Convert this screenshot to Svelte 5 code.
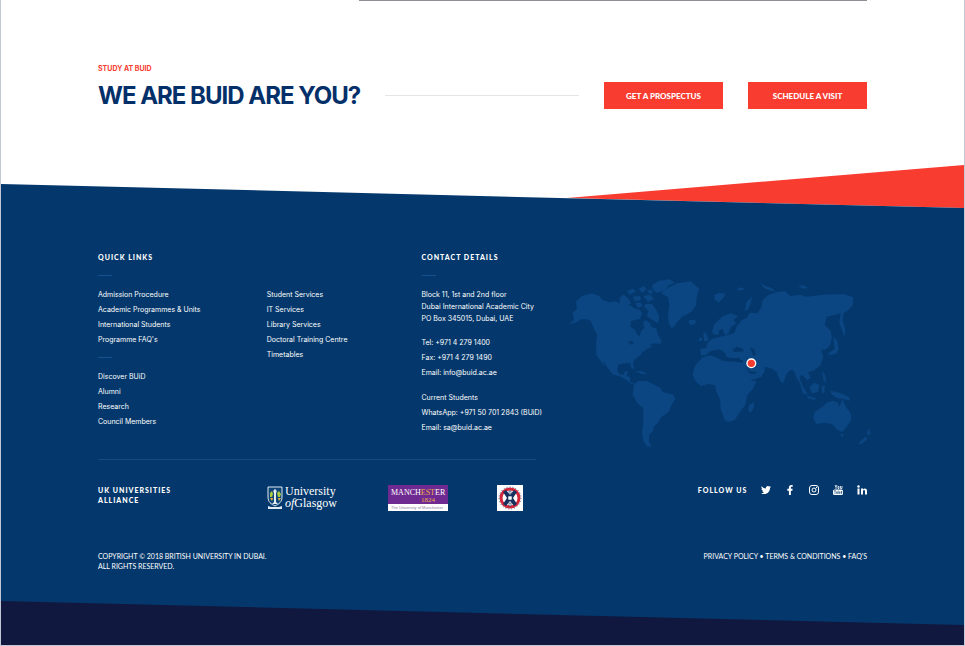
<script>
	const programmes = ['Admission Procedure', 'Academic Programmes & Units', 'International Students', "Programme FAQ's"];
	const about = ['Discover BUiD', 'Alumni', 'Research', 'Council Members'];
	const services = ['Student Services', 'IT Services', 'Library Services', 'Doctoral Training Centre', 'Timetables'];
</script>

<div class="page">
	<section class="study">
		<div class="strip"></div>
		<p class="eyebrow">STUDY AT BUID</p>
		<div class="cta">
			<h1>WE ARE BUID ARE YOU?</h1>
			<span class="rule"></span>
			<button>GET A PROSPECTUS</button>
			<button>SCHEDULE A VISIT</button>
		</div>
	</section>

	<svg class="slant top" viewBox="0 0 963 43" preserveAspectRatio="none" aria-hidden="true">
		<path fill="#f93c30" d="M566 33 963 0v43z" />
		<path fill="#04386c" d="M0 19 963 43H0z" />
	</svg>

	<footer>
		<div class="columns">
			<div class="info">
				<nav class="links" aria-label="Quick links">
					<h2>QUICK LINKS</h2>
					<span class="dash"></span>
					<div class="lists">
						<div>
							<ul>
								{#each programmes as item}
									<li><a href="#top">{item}</a></li>
								{/each}
							</ul>
							<span class="dash"></span>
							<ul>
								{#each about as item}
									<li><a href="#top">{item}</a></li>
								{/each}
							</ul>
						</div>
						<ul>
							{#each services as item}
								<li><a href="#top">{item}</a></li>
							{/each}
						</ul>
					</div>
				</nav>
				<div class="contact">
					<h2>CONTACT DETAILS</h2>
					<span class="dash"></span>
					<address>
						Block 11, 1st and 2nd floor<br />
						Dubai International Academic City<br />
						PO Box 345015, Dubai, UAE
					</address>
					<ul>
						<li>Tel: +971 4 279 1400</li>
						<li>Fax: +971 4 279 1490</li>
						<li>Email: <a href="mailto:info@buid.ac.ae">info@buid.ac.ae</a></li>
					</ul>
					<ul>
						<li>Current Students</li>
						<li>WhatsApp: +971 50 701 2843 (BUiD)</li>
						<li>Email: <a href="mailto:sa@buid.ac.ae">sa@buid.ac.ae</a></li>
					</ul>
				</div>
			</div>

			<svg class="map" viewBox="24 24 912 516" role="img" aria-label="World map, Dubai marked">
				<g fill="#0b4682">
					<!-- north and central america -->
					<path d="M38 128 51 116 48 94 66 78 96 70 118 79 128 90 150 97 168 94 184 104 210 106 226 116 240 119 246 130 240 146 226 150 213 153 211 170 226 180 232 196 240 197 243 182 253 174 249 158 256 150 269 158 274 170 289 176 294 194 304 212 302 222 282 220 266 226 280 228 262 236 249 246 238 258 226 267 219 276 221 298 214 294 210 280 190 280 175 284 172 302 180 314 192 313 195 303 204 304 200 318 210 322 210 336 224 341 214 342 200 331 182 320 158 313 148 300 134 280 128 272 134 290 122 272 109 255 108 220 112 195 102 176 92 152 76 147 64 148 46 158 25 161 42 150z" />
					<!-- arctic islands -->
					<path d="M178 84 190 74 204 84 214 100 196 110 180 104z M200 64l18-8 10 8-18 10z M218 80l22-2 4 12-20 4z M236 56l16-8 8 10-14 10z M250 78l20-4 12 14-18 8z M256 102l20 0 14 20 8 18-4 20-20-12-14-10 6-14-14-14z M226 100l14-4 8 12-14 6z M262 62l14-4 2 12-10 2z" />
					<path d="M276 46 298 32 330 28 344 38 324 48 314 62 290 68 280 60z" />
					<path d="M226 304 246 304 264 312 244 312z M212 226l10-2 6 8-10 2z" />
					<!-- greenland, iceland -->
					<path d="M304 70 322 54 352 40 392 34 418 56 410 80 408 106 394 126 366 140 350 158 336 176 326 160 324 134 328 106 324 82z M388 150 406 150 408 160 394 166 386 158z" />
					<!-- south america -->
					<path d="M222 342 236 332 262 334 286 346 302 354 308 366 340 374 346 386 334 406 326 426 304 440 296 456 282 470 278 484 268 494 266 514 276 530 260 528 250 512 246 488 250 458 250 414 232 400 218 374z" />
					<!-- africa -->
					<path d="M428 262 452 256 466 260 488 272 514 270 530 276 548 278 562 312 572 332 590 334 578 358 562 374 556 404 540 426 524 450 504 456 494 450 482 416 480 388 468 362 466 346 446 342 422 348 404 330 398 312 406 286z M568 404 582 396 582 412 572 428 564 420z" />
					<!-- british isles, scandinavia -->
					<path d="M430 186 440 192 446 212 432 214z M418 204l8-2 0 10-10 2z" />
					<path d="M456 186 462 164 486 140 512 130 534 138 520 150 530 160 512 172 506 190 494 196 488 178 478 180 476 194 462 194z" />
					<path d="M462 76l16-8 18 4-8 14-12 12-12-10z" />
					<!-- europe and asia -->
					<path d="M422 256 422 236 440 234 440 222 454 208 474 202 500 196 522 190 530 170 546 150 560 144 570 128 592 130 604 112 608 90 624 76 650 66 676 64 690 78 720 74 740 80 790 74 850 72 880 82 878 106 862 122 850 130 848 148 856 180 854 202 846 180 838 160 842 130 820 136 800 140 794 164 812 182 816 204 810 226 798 238 784 240 790 260 782 286 760 302 744 306 752 324 742 330 726 314 718 322 730 354 738 376 728 368 720 340 710 324 702 302 690 300 678 314 670 340 660 332 650 306 636 296 614 290 614 304 604 320 570 332 556 308 548 282 548 270 520 266 500 262 496 250 480 238 466 240 450 244 438 256z" />
					<path d="M554 124 560 96 576 80 572 100 566 116z M600 40 612 46 634 54 646 64 632 62 612 54z M714 48 730 46 744 54 728 56z M530 58 542 52 556 56 540 62z" />
					<!-- japan, philippines, indonesia -->
					<path d="M820 200 832 212 836 236 828 252 808 256 806 248 824 238z M786 302 796 316 798 340 790 330z" />
					<path d="M720 342 734 358 744 374 734 370z M748 352 762 338 778 344 774 366 756 370z M742 378 768 384 764 390 742 384z M784 350l10-4 0 20-8 6z M810 362 838 368 866 380 870 392 848 386 830 384 816 374z" />
					<!-- australia, new zealand -->
					<path d="M764 426 786 412 800 398 820 392 834 398 838 410 848 388 858 412 872 430 874 450 860 470 848 486 832 480 816 462 794 458 768 462 760 444z M840 492 852 492 846 502z M924 476 932 488 926 498 922 492z M916 500 922 508 904 522 894 522z" />
				</g>
				<!-- inland seas -->
				<g fill="#04386c">
					<path d="M518 240 530 230 548 236 552 244 522 246z M570 232 582 236 588 254 580 258z M484 260 512 264 540 264 540 272 510 276 486 270z M554 286 570 304 590 306 586 312 570 312z M204 216l12-4 6 8-10 4z" />
				</g>
				<circle cx="574" cy="280" r="15" fill="#fff" />
				<circle cx="574" cy="280" r="11" fill="#f93c30" />
			</svg>
		</div>

		<div class="partners">
			<h2>UK UNIVERSITIES<br />ALLIANCE</h2>
			<div class="logos">
				<svg width="72" height="26" viewBox="0 0 72 26" role="img" aria-label="University of Glasgow">
					<path d="M1 2h14v10c0 5-3 7-7 9-4-2-7-4-7-9z" fill="#0f4478" stroke="#dfe9f2" />
					<path d="M8 4c2 1 2 3 1 4v9l2 2H5l2-2V8C6 7 6 5 8 4z" fill="#e4edf0" />
					<path d="M3 8l2-2 1 3-1 3H3zM10 8l2-2 2 3-1 3h-2z" fill="#a9c93f" />
					<path d="M3 13h3l-1 3zM11 13h3l-2 3z" fill="#e7b43a" />
					<path d="M1 21l3 1h8l3-1v3H1z" fill="#dfe9f2" />
					<text class="serif" x="18" y="10" font-size="12" fill="#fff">University</text>
					<text class="serif" x="18" y="22" font-size="12" fill="#fff"><tspan font-style="italic">of</tspan>Glasgow</text>
				</svg>
				<svg width="60" height="26" viewBox="0 0 60 26" role="img" aria-label="The University of Manchester">
					<path fill="#6f2a91" d="M0 0h60v19H0z" />
					<path fill="#fff" d="M0 19h60v7H0z" />
					<text class="serif" x="3" y="10" font-size="8" fill="#fff">MANCH<tspan fill="#eeb14a">EST</tspan>ER</text>
					<text class="serif" x="33" y="17" font-size="7" fill="#eeb14a">1824</text>
					<text class="sans" x="3" y="24" font-size="4" fill="#8f7aa0">The University of Manchester</text>
				</svg>
				<svg width="26" height="26" viewBox="0 0 26 26" role="img" aria-label="The University of Edinburgh">
					<path fill="#fff" d="M0 0h26v26H0z" />
					<circle cx="13" cy="13" r="9" fill="#fff" stroke="#d3283c" stroke-width="3" />
					<path d="M6 7l3-2 4 5 4-5 3 2-4 6 4 6-3 2-4-5-4 5-3-2 4-6z" fill="#17315f" />
					<circle cx="13" cy="13" r="11" fill="none" stroke="#4a5c85" stroke-dasharray="1 2" />
					<path d="M11 11h4v4h-4zM12 6h2v3h-2zM12 18h2v3h-2z" fill="#fff" stroke="#17315f" stroke-width=".6" />
				</svg>
			</div>
			<div class="social">
				<h2>FOLLOW US</h2>
				<a href="#twitter" aria-label="Twitter">
					<svg viewBox="0 0 24 24"><path d="M23.953 4.57a10 10 0 01-2.825.775 4.958 4.958 0 002.163-2.723c-.951.555-2.005.959-3.127 1.184a4.92 4.92 0 00-8.384 4.482C7.69 8.095 4.067 6.13 1.64 3.162a4.822 4.822 0 00-.666 2.475c0 1.71.87 3.213 2.188 4.096a4.904 4.904 0 01-2.228-.616v.06a4.923 4.923 0 003.946 4.827 4.996 4.996 0 01-2.212.085 4.936 4.936 0 004.604 3.417 9.867 9.867 0 01-6.102 2.105c-.39 0-.779-.023-1.17-.067a13.995 13.995 0 007.557 2.209c9.053 0 13.998-7.496 13.998-13.985 0-.21 0-.42-.015-.63A9.935 9.935 0 0024 4.59z" /></svg>
				</a>
				<a href="#facebook" aria-label="Facebook">
					<svg viewBox="-96 0 512 512"><path d="M279.14 288l14.22-92.66h-88.91v-60.13c0-25.35 12.42-50.06 52.24-50.06h40.42V6.26S260.43 0 225.36 0c-73.22 0-121.08 44.38-121.08 124.72v70.62H22.89V288h81.39v224h100.17V288z" /></svg>
				</a>
				<a href="#instagram" aria-label="Instagram">
					<svg viewBox="0 0 20 20">
						<rect x="1" y="1" width="18" height="18" rx="5" fill="none" stroke="#fff" stroke-width="2" />
						<circle cx="10" cy="10" r="4" fill="none" stroke="#fff" stroke-width="2" />
						<circle cx="15" cy="5" r="1.3" />
					</svg>
				</a>
				<a href="#youtube" aria-label="YouTube">
					<svg viewBox="0 0 20 20">
						<path d="M3 9h14q3 0 3 3v5q0 3-3 3H3q-3 0-3-3v-5q0-3 3-3z" />
						<path d="M4 0l2 4 2-4M6 4v4M10 3h2v4h-2zM15 2v5h3V2" fill="none" stroke="#fff" stroke-width="1.6" />
						<path d="M2 11.500h4M4 11.500V18M7 13v4h2v-4M11.500 11v6h2v-3h-2M18 17h-2v-4h2v2h-2" fill="none" stroke="#04386c" stroke-width="1.1" />
					</svg>
				</a>
				<a href="#linkedin" aria-label="LinkedIn">
					<svg viewBox="0 0 20 20">
						<circle cx="3" cy="3" r="2.400" />
						<path d="M1 7h4v12H1zM8 7h4v2c2-3 8-3 8 3v7h-4v-6c0-4-4-4-4 0v6H8z" />
					</svg>
				</a>
			</div>
		</div>

		<div class="legal">
			<p>COPYRIGHT © 2018 BRITISH UNIVERSITY IN DUBAI.<br />ALL RIGHTS RESERVED.</p>
			<p><a href="#privacy">PRIVACY POLICY</a> • <a href="#terms">TERMS & CONDITIONS</a> • <a href="#faqs">FAQ'S</a></p>
		</div>
	</footer>

	<svg class="slant bottom" viewBox="0 0 963 44" preserveAspectRatio="none" aria-hidden="true">
		<path fill="#11183f" d="M0 0 963 24V44H0z" />
	</svg>
</div>

<style>
	:global(body) {
		margin: 0;
		background: #fff;
	}

	.page {
		border: 1px solid #c3c9d4;
		border-top: 0;
		font-family: Inter, sans-serif;
		font-size: 7px;
		color: #fff;
	}

	h1, h2, p, ul {
		margin: 0;
		padding: 0;
	}

	li { list-style: none }

	a {
		color: inherit;
		text-decoration: none;
	}

	svg { display: block }

	.study {
		padding: 0 97px 56px;
	}

	.strip {
		width: 66%;
		height: 1px;
		margin: 0 0 63px auto;
		background: #8f8e94;
	}

	.eyebrow {
		margin-bottom: 8px;
		font-size: 7px;
		line-height: 10px;
		font-weight: 700;
		color: #f93c30;
	}

	.cta {
		display: flex;
		align-items: center;
		gap: 25px;
	}

	h1 {
		font-size: 24px;
		line-height: 27px;
		font-weight: 700;
		letter-spacing: -1px;
		white-space: nowrap;
		color: #04306a;
	}

	.rule {
		flex: 1;
		height: 1px;
		background: #e4e5e8;
	}

	button {
		width: 119px;
		height: 27px;
		padding: 0;
		border: 0;
		background: #f93c30;
		font: 900 8px/10px Lato, sans-serif;
		color: #fff;
	}

	.slant { width: 100% }
	.slant.top { height: 43px }
	.slant.bottom { height: 44px; background: #04386c }

	footer {
		padding: 44px 97px 30px;
		background: #04386c;
	}

	.columns {
		display: flex;
		justify-content: space-between;
		align-items: flex-start;
	}

	.info {
		display: grid;
		grid-template-columns: minmax(0, 324fr) minmax(0, 115fr);
		width: 57%;
		padding-bottom: 24px;
		border-bottom: 1px solid #174a82;
	}

	h2 {
		font-family: Lato, sans-serif;
		font-size: 7px;
		line-height: 10px;
		font-weight: 900;
		letter-spacing: 1px;
	}

	.dash {
		display: block;
		width: 14px;
		height: 1px;
		margin: 10px 0 11px;
		background: #17508f;
	}

	h2 + .dash { margin-top: 13px }

	.lists {
		display: grid;
		grid-template-columns: 169fr 155fr;
	}

	li {
		line-height: 15px;
		white-space: nowrap;
	}

	address {
		padding-top: 2px;
		font-style: normal;
		line-height: 12px;
		white-space: nowrap;
	}

	.contact ul { margin-top: 10px }

	.map {
		width: 304px;
		margin: 26px -5px 0 0;
	}

	.partners {
		display: flex;
		align-items: flex-start;
		margin-top: 25px;
	}

	.partners > h2 { width: 22% }

	.logos {
		display: flex;
		gap: 49px;
	}

	.serif { font-family: "Liberation Serif", serif }
	.sans { font-family: "Liberation Sans", sans-serif }

	.social {
		display: flex;
		align-items: center;
		justify-content: space-between;
		width: 22%;
		margin-left: auto;
	}

	.social svg {
		width: 10px;
		height: 10px;
		fill: #fff;
	}

	.legal {
		display: flex;
		justify-content: space-between;
		margin-top: 40px;
		font-family: Lato, sans-serif;
		font-size: 7px;
		line-height: 10px;
	}
</style>
